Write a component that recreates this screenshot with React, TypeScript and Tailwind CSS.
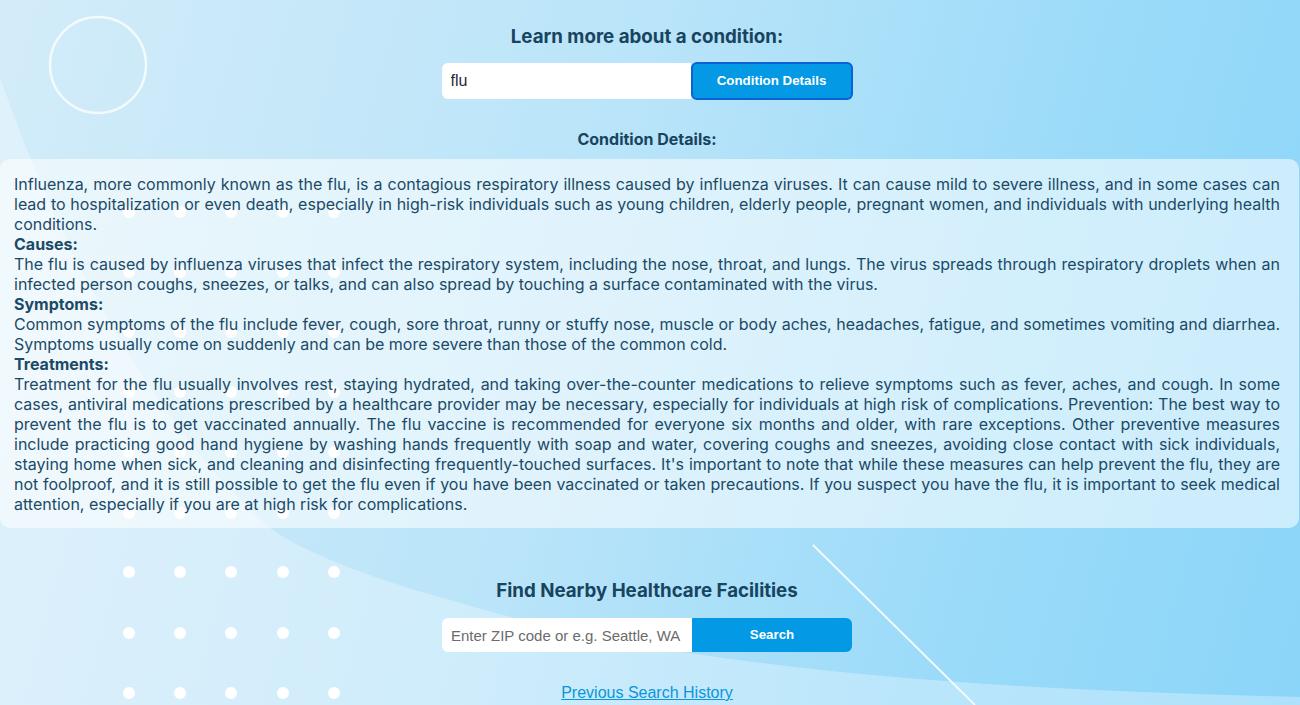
import React from 'react';

const body = "font-['Inter','Noto_Sans',sans-serif]";
const arial = "font-['Liberation_Sans',Arial,sans-serif]";

const dotCols = [129, 180, 231, 283, 334];
const dotRows = [212, 272, 332, 392, 452, 513, 572, 633, 693];

function Backdrop() {
  return (
    <svg
      className="absolute inset-0 h-full w-full"
      viewBox="0 0 1300 705"
      preserveAspectRatio="none"
    >
      <path
        d="M0,77 C60,250 150,420 270,528 C300,550 360,575 450,600 C650,660 900,688 1300,697 L1300,705 L0,705 Z"
        fill="#ffffff"
        opacity="0.3"
      />
      <line x1="813" y1="545" x2="975" y2="705" stroke="#ffffff" strokeWidth="2" opacity="0.85" />
      <circle cx="98" cy="65" r="48" fill="none" stroke="#ffffff" strokeWidth="2.5" opacity="0.75" />
      {dotRows.map((y) =>
        dotCols.map((x) => <circle key={`${x}-${y}`} cx={x} cy={y} r="6" fill="#ffffff" />)
      )}
    </svg>
  );
}

export default function App() {
  return (
    <div className="relative h-[705px] w-full overflow-hidden bg-[linear-gradient(105deg,#d3ecf9_0%,#b9e4f9_45%,#9bdbf9_75%,#8bd5f9_100%)]">
      <Backdrop />
      <div className={`relative flex flex-col ${body}`}>
        <section className="flex flex-col items-center pr-[6px] pt-[23px]">
          <h2 className="text-[18.72px] font-bold leading-[28px] text-[#17445f]">Learn more about a condition:</h2>
          <div className="mt-[12px] flex">
            <input
              defaultValue="flu"
              className={`h-[36px] w-[249px] rounded-l-md bg-white px-[9px] text-[16px] text-[#1f2937] outline-none ${arial}`}
            />
            <button
              className={`-my-[1px] h-[38px] w-[162px] rounded-md border-2 border-[#0b62d4] bg-[#0399e4] text-[13.33px] font-bold text-white ${arial}`}
            >
              Condition Details
            </button>
          </div>
          <h3 className="mt-[28px] text-[16px] font-bold leading-[24px] text-[#17445f]">Condition Details:</h3>
        </section>

        <div className="mt-[8px] mr-[1px] rounded-[10px] bg-white/55 pb-[14px] pl-[14px] pr-[19px] pt-[15px] text-justify text-[16px] leading-[20px] text-[#1b4a66]">
          <p>
            Influenza, more commonly known as the flu, is a contagious respiratory illness caused by influenza viruses. It can cause mild to severe illness, and in some cases can lead to hospitalization or even death, especially in high-risk individuals such as young children, elderly people, pregnant women, and individuals with underlying health conditions.
          </p>
          <p className="font-bold">Causes:</p>
          <p>
            The flu is caused by influenza viruses that infect the respiratory system, including the nose, throat, and lungs. The virus spreads through respiratory droplets when an infected person coughs, sneezes, or talks, and can also spread by touching a surface contaminated with the virus.
          </p>
          <p className="font-bold">Symptoms:</p>
          <p>
            Common symptoms of the flu include fever, cough, sore throat, runny or stuffy nose, muscle or body aches, headaches, fatigue, and sometimes vomiting and diarrhea. Symptoms usually come on suddenly and can be more severe than those of the common cold.
          </p>
          <p className="font-bold">Treatments:</p>
          <p>
            Treatment for the flu usually involves rest, staying hydrated, and taking over-the-counter medications to relieve symptoms such as fever, aches, and cough. In some cases, antiviral medications prescribed by a healthcare provider may be necessary, especially for individuals at high risk of complications. Prevention: The best way to prevent the flu is to get vaccinated annually. The flu vaccine is recommended for everyone six months and older, with rare exceptions. Other preventive measures include practicing good hand hygiene by washing hands frequently with soap and water, covering coughs and sneezes, avoiding close contact with sick individuals, staying home when sick, and cleaning and disinfecting frequently-touched surfaces. It's important to note that while these measures can help prevent the flu, they are not foolproof, and it is still possible to get the flu even if you have been vaccinated or taken precautions. If you suspect you have the flu, it is important to seek medical attention, especially if you are at high risk for complications.
          </p>
        </div>

        <section className="flex flex-col items-center pr-[6px] pt-[49px]">
          <h2 className="text-[18.72px] font-bold leading-[28px] text-[#17445f]">Find Nearby Healthcare Facilities</h2>
          <div className="mt-[13px] flex">
            <input
              placeholder="Enter ZIP code or e.g. Seattle, WA"
              className={`h-[34px] w-[250px] rounded-l-md bg-white px-[9px] text-[15px] text-[#1f2937] outline-none placeholder:text-[#6b6b6b] ${arial}`}
            />
            <button className={`h-[34px] w-[160px] rounded-r-md bg-[#0399e4] text-[13.33px] font-bold text-white ${arial}`}>
              Search
            </button>
          </div>
          <a href="#" className={`mt-[32px] text-[16px] leading-[18px] text-[#0896dc] underline ${arial}`}>
            Previous Search History
          </a>
        </section>
      </div>
    </div>
  );
}
